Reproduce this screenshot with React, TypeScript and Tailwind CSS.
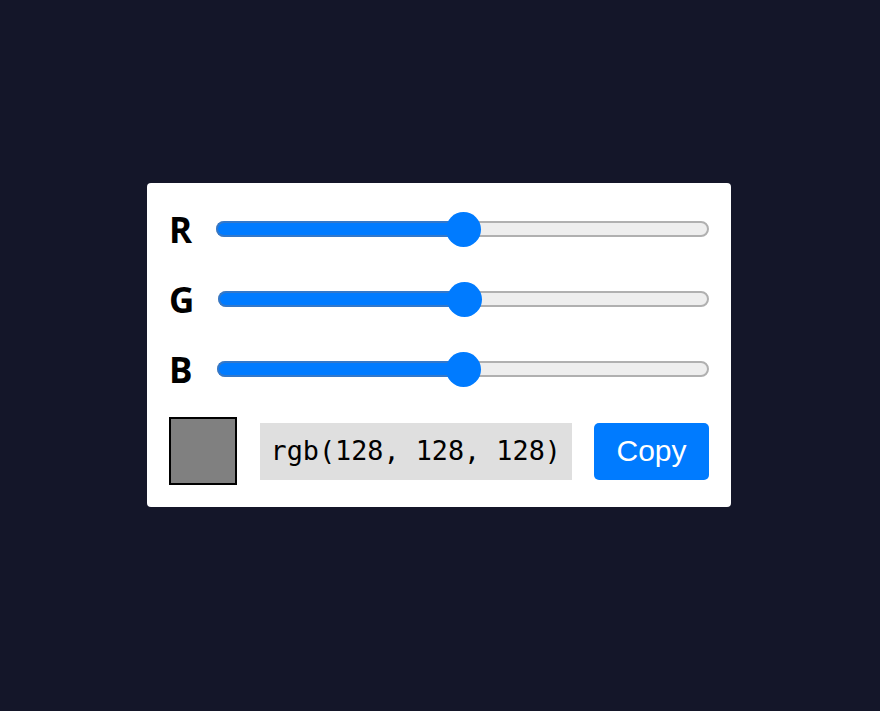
import React from "react";

function Slider({ value }: { value: number }) {
  const frac = value / 255;
  const thumb = 35;
  return (
    <div className="relative flex-1 h-[35px] flex items-center">
      <div className="relative w-full h-[16px] rounded-full border-2 border-[#b0b0b0] bg-[#eeeeee]" />
      <div
        className="absolute left-0 top-1/2 -translate-y-1/2 h-[16px] rounded-l-full bg-[#007bff] border-y-2 border-l-2 border-[#3478c9]"
        style={{ width: `calc(${thumb / 2}px + ${frac} * (100% - ${thumb}px))` }}
      />
      <div
        className="absolute top-0 w-[35px] h-[35px] rounded-full bg-[#007bff]"
        style={{ left: `calc(${frac} * (100% - ${thumb}px))` }}
      />
    </div>
  );
}

function Row({ label, value }: { label: string; value: number }) {
  return (
    <div className="flex items-center h-[48px]">
      <span
        className="text-[35px] font-bold text-black leading-none"
        style={{ fontFamily: '"Open Sans", "Noto Sans", sans-serif' }}
      >
        {label}
      </span>
      <div className="ml-[24px] flex-1 flex">
        <Slider value={value} />
      </div>
    </div>
  );
}

export default function App() {
  return (
    <div className="min-h-[711px] w-full bg-[#141629] flex items-start justify-start">
      <div className="ml-[147px] mt-[183px] w-[584px] h-[324px] bg-white rounded-[4px] px-[22px] pt-[22px] pb-[22px] flex flex-col">
        <Row label="R" value={128} />
        <div className="mt-[22px]">
          <Row label="G" value={128} />
        </div>
        <div className="mt-[22px]">
          <Row label="B" value={128} />
        </div>
        <div className="mt-[24px] flex items-center justify-between h-[68px]">
          <div className="w-[68px] h-[68px] border-2 border-black bg-[#808080]" />
          <div
            className="h-[57px] w-[312px] bg-[#dfdfdf] flex items-center px-[11px] text-[26.8px] text-black whitespace-nowrap"
            style={{ fontFamily: '"DejaVu Sans Mono", monospace' }}
          >
            rgb(128, 128, 128)
          </div>
          <button
            className="h-[57px] w-[115px] bg-[#007bff] rounded-[5px] text-white text-[30px] flex items-center justify-center pb-[2px]"
            style={{ fontFamily: '"Liberation Sans", Arial, sans-serif' }}
          >
            Copy
          </button>
        </div>
      </div>
    </div>
  );
}
